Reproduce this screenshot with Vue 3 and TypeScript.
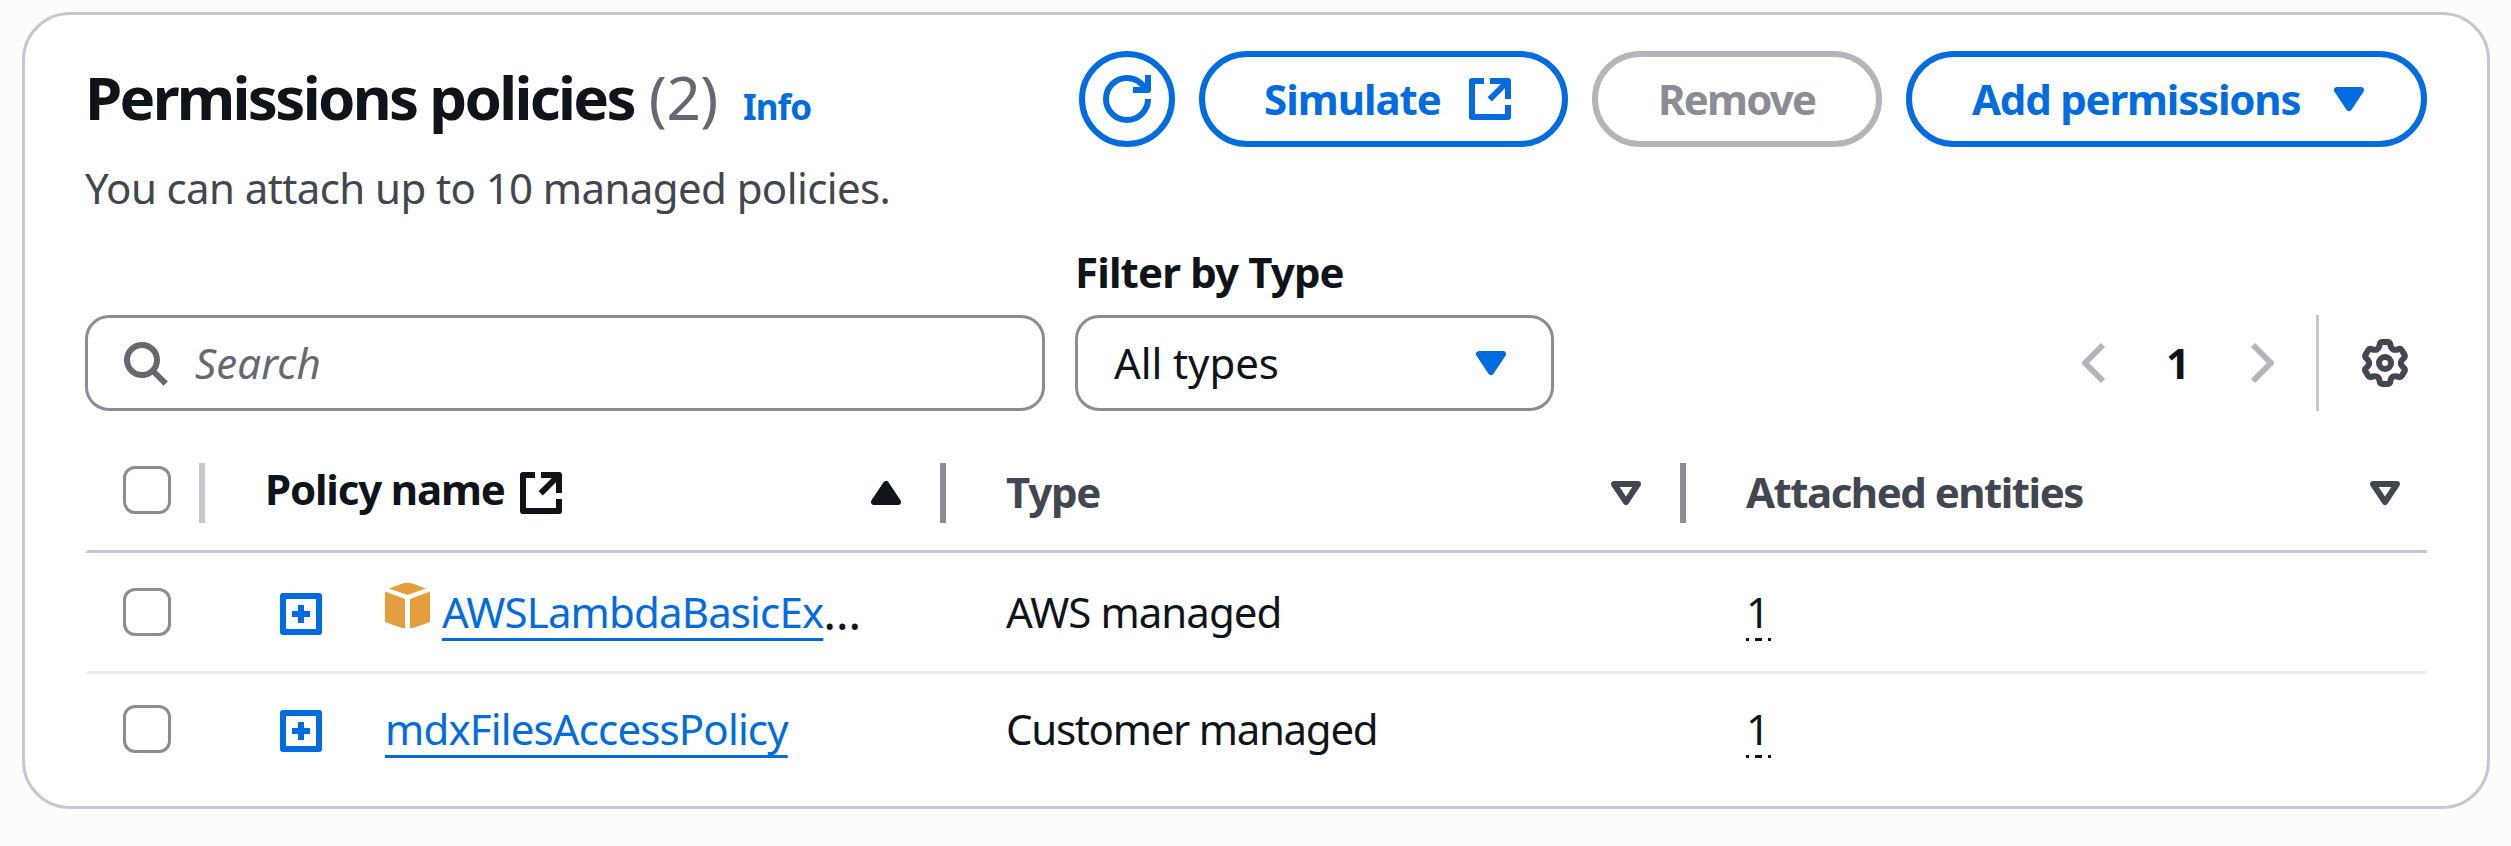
<script setup lang="ts">
interface Policy {
  name: string
  truncated: boolean
  awsManaged: boolean
  type: string
  entities: number
}

const policies: Policy[] = [
  { name: 'AWSLambdaBasicEx', truncated: true, awsManaged: true, type: 'AWS managed', entities: 1 },
  { name: 'mdxFilesAccessPolicy', truncated: false, awsManaged: false, type: 'Customer managed', entities: 1 },
]

// Six-tooth gear outline, centred on (8, 8) of a 16-unit box.
function gearOutline(): string {
  const at = (deg: number, u: number, v: number): string => {
    const a = (deg * Math.PI) / 180
    const x = 8 + u * Math.cos(a) + v * Math.sin(a)
    const y = 8 + u * Math.sin(a) - v * Math.cos(a)
    return `${x.toFixed(2)} ${y.toFixed(2)}`
  }
  let d = `M${at(0, -1.8, 6)}`
  for (let deg = 0; deg < 360; deg += 60) {
    d += `Q${at(deg, -1.7, 7)} ${at(deg, -0.8, 7)}L${at(deg, 0.8, 7)}Q${at(deg, 1.7, 7)} ${at(deg, 1.8, 6)}`
    d += `C${at(deg, 2.05, 4.6)} ${at(deg + 60, -2.05, 4.6)} ${at(deg + 60, -1.8, 6)}`
  }
  return d + 'Z'
}
const gear = gearOutline()
</script>

<template>
  <main class="page">
    <section class="card">
      <header class="header">
        <div class="heading">
          <h2 class="title-row">
            <span class="title">Permissions policies</span>
            <span class="counter">(2)</span>
            <a class="info">Info</a>
          </h2>
          <p class="description">You can attach up to 10 managed policies.</p>
        </div>
        <div class="actions">
          <button class="btn btn-round" aria-label="Refresh">
            <svg class="icon" viewBox="0 0 16 16">
              <path class="line" d="M10 5h5V0" />
              <path class="line" d="M15 8a7 7 0 1 1-7-7 6.87 6.87 0 0 1 6.3 4" />
            </svg>
          </button>
          <button class="btn btn-simulate">
            <span class="simulate-text">Simulate</span>
            <svg class="icon" viewBox="0 0 16 16">
              <path class="line" d="M14 10v4H2V2h4M8 2h6v6M14 2 7.9 8.1" />
            </svg>
          </button>
          <button class="btn btn-remove" disabled><span class="remove-text">Remove</span></button>
          <button class="btn btn-add">
            <span class="add-text">Add permissions</span>
            <svg class="icon" viewBox="0 0 16 16"><path class="solid" d="M4 5h8l-4 6z" /></svg>
          </button>
        </div>
      </header>

      <div class="toolbar">
        <div class="field search">
          <svg class="icon" viewBox="0 0 16 16">
            <circle class="line" cx="7" cy="7" r="5" />
            <path class="line" d="m14.9 14.9-4.4-4.4" />
          </svg>
          <span class="placeholder">Search</span>
        </div>
        <div class="filter">
          <label class="filter-label">Filter by Type</label>
          <div class="field select">
            <span class="select-value">All types</span>
            <svg class="icon caret" viewBox="0 0 16 16"><path class="solid" d="M4 5h8l-4 6z" /></svg>
          </div>
        </div>
        <nav class="pagination">
          <svg class="icon arrow" viewBox="0 0 16 16"><path class="line" d="M11 2 5 8l6 6" /></svg>
          <span class="page-number">1</span>
          <svg class="icon arrow" viewBox="0 0 16 16"><path class="line" d="m5 2 6 6-6 6" /></svg>
          <span class="separator"></span>
          <svg class="icon gear" viewBox="0 0 16 16">
            <path class="line" :d="gear" />
            <circle class="line" cx="8" cy="8" r="2" />
          </svg>
        </nav>
      </div>

      <div class="table">
        <div class="row head">
          <div class="cell check"><span class="checkbox"></span><span class="divider light"></span></div>
          <div class="cell name-head">
            <span class="name-label">Policy name</span>
            <svg class="icon" viewBox="0 0 16 16">
              <path class="line" d="M14 10v4H2V2h4M8 2h6v6M14 2 7.9 8.1" />
            </svg>
            <svg class="icon sort" viewBox="0 0 16 16"><path class="solid" d="M4 11h8L8 5z" /></svg>
            <span class="divider"></span>
          </div>
          <div class="cell other-head">
            <span class="type-label">Type</span>
            <svg class="icon sort" viewBox="0 0 16 16"><path class="line" d="M4 5h8l-4 6z" /></svg>
            <span class="divider"></span>
          </div>
          <div class="cell other-head">
            <span class="entities-label">Attached entities</span>
            <svg class="icon sort last" viewBox="0 0 16 16"><path class="line" d="M4 5h8l-4 6z" /></svg>
          </div>
        </div>
        <div v-for="policy in policies" :key="policy.name" class="row body">
          <div class="cell check"><span class="checkbox"></span></div>
          <div class="cell name-cell">
            <svg class="icon expand" viewBox="0 0 16 16">
              <path class="line" d="M2 2h12v12H2zM8 5v6M5 8h6" />
            </svg>
            <svg v-if="policy.awsManaged" class="cube" viewBox="0 0 45 45">
              <path d="M4 5.5 19 0h7l15 5.5-18.500 6.500zM0 8.500l20 7.500v29h-3L0 39zM45 8.500 25 16v29h3l17-6z" />
            </svg>
            <a class="link">{{ policy.name }}</a><span v-if="policy.truncated" class="ellipsis">…</span>
          </div>
          <div class="cell text-cell">
            <span :class="policy.awsManaged ? 'aws-type' : 'customer-type'">{{ policy.type }}</span>
          </div>
          <div class="cell text-cell"><span class="entities">{{ policy.entities }}</span></div>
        </div>
      </div>
    </section>
  </main>
</template>

<style>
body {
  margin: 0;
  background: #fcfcfd;
}
</style>

<style scoped>
.page {
  box-sizing: border-box;
  height: 846px;
  padding: 12px 21px 0 22px;
  font-family: "Noto Sans", "Open Sans", sans-serif;
  font-size: 42px;
  line-height: 60px;
  color: #0f141a;
  white-space: nowrap;
}
.card {
  box-sizing: border-box;
  height: 797px;
  padding: 36px 60px 0;
  border: 3px solid #c6c6cd;
  border-radius: 48px;
  background: #fff;
}
.icon {
  display: block;
  flex: none;
  width: 48px;
  height: 48px;
  overflow: visible;
  color: inherit;
}
.line,
.solid {
  fill: none;
  stroke: currentColor;
  stroke-width: 2;
  stroke-linejoin: round;
}
.solid {
  fill: currentColor;
}
.header {
  display: flex;
  justify-content: space-between;
  height: 190px;
}
.heading {
  padding-top: 10px;
}
.title-row {
  display: flex;
  align-items: baseline;
  height: 72px;
  margin: 0;
  font-size: 60px;
  line-height: 72px;
}
.title {
  letter-spacing: -2.7px;
}
.counter {
  margin-left: 15px;
  font-weight: 400;
  letter-spacing: -0.4px;
  color: #656871;
}
.info {
  margin-left: 25px;
  font-size: 35px;
  line-height: 40px;
  letter-spacing: -0.9px;
  color: #006ce0;
}
.description {
  margin: 25px 0 0;
  letter-spacing: -0.6px;
  color: #424650;
}
.actions {
  display: flex;
  gap: 24px;
}
.btn {
  box-sizing: border-box;
  display: flex;
  align-items: center;
  justify-content: space-between;
  height: 96px;
  padding: 0 48px 0 60px;
  border: 6px solid #006ce0;
  border-radius: 48px;
  background: #fff;
  font: inherit;
  font-weight: 700;
  color: #006ce0;
}
.btn-round {
  justify-content: center;
  width: 96px;
  padding: 0;
}
.btn-simulate {
  width: 369px;
  padding-left: 59px;
}
.btn-remove {
  width: 290px;
  border-color: #b4b4bb;
  color: #8c8c94;
}
.btn-add {
  width: 521px;
}
.simulate-text {
  letter-spacing: -1px;
}
.remove-text {
  letter-spacing: -1.8px;
}
.add-text {
  letter-spacing: -1.2px;
}
.toolbar {
  display: flex;
  align-items: flex-end;
  height: 170px;
}
.field {
  box-sizing: border-box;
  display: flex;
  align-items: center;
  height: 96px;
  border: 3px solid #8c8c94;
  border-radius: 24px;
}
.search {
  width: 960px;
  padding-left: 33px;
  color: #656871;
}
.placeholder {
  margin-left: 26px;
  font-style: italic;
  letter-spacing: 0.1px;
}
.filter {
  margin-left: 30px;
}
.filter-label {
  display: block;
  margin-bottom: 13px;
  font-weight: 700;
  letter-spacing: -0.85px;
}
.select {
  justify-content: space-between;
  width: 479px;
  padding: 0 36px;
}
.select-value {
  letter-spacing: -0.1px;
}
.caret {
  color: #006ce0;
}
.pagination {
  display: flex;
  align-items: center;
  height: 96px;
  margin-left: auto;
  padding-right: 18px;
}
.arrow {
  color: #b4b4bb;
}
.page-number {
  width: 24px;
  margin: 0 48px;
  font-weight: 700;
}
.separator {
  width: 3px;
  height: 96px;
  margin: 0 42px 0 30px;
  background: #c6c6cd;
}
.gear {
  color: #424650;
}
.table {
  margin-top: 25px;
}
.row {
  box-sizing: border-box;
  display: grid;
  grid-template-columns: 117px 741px 740px 741px;
  border-bottom: 3px solid #ebebf0;
  border-left: 3px solid transparent;
}
.head {
  height: 117px;
  border-bottom-color: #c6c6cd;
  font-weight: 700;
}
.body {
  height: 121px;
}
.body:last-child {
  height: 110px;
  border-bottom: 0;
}
.cell {
  display: flex;
  align-items: center;
  min-width: 0;
}
.check {
  justify-content: space-between;
  padding-left: 35px;
}
.checkbox {
  box-sizing: border-box;
  width: 48px;
  height: 48px;
  border: 3px solid #8c8c94;
  border-radius: 12px;
}
.head .checkbox {
  margin-bottom: 6px;
}
.divider {
  width: 6px;
  height: 60px;
  background: #8c8c94;
}
.light {
  background: #c6c6cd;
}
.name-head {
  padding-left: 60px;
}
.name-label {
  margin: 0 12px 8px 0;
  letter-spacing: -1.16px;
}
.other-head {
  padding-left: 60px;
  color: #424650;
}
.type-label,
.entities-label {
  margin-bottom: 2px;
  letter-spacing: -1.2px;
}
.entities-label {
  letter-spacing: -1.5px;
}
.sort {
  margin: 0 30px 0 auto;
}
.last {
  margin-right: 18px;
}
.name-cell {
  padding-left: 72px;
}
.expand {
  margin: 4px 60px 0 0;
  color: #006ce0;
}
.cube {
  width: 45px;
  height: 45px;
  margin: 0 12px 13px 0;
  fill: #e59e3d;
}
.link {
  letter-spacing: -0.85px;
  color: #006ce0;
  text-decoration: underline;
  text-decoration-thickness: 3px;
  text-decoration-skip-ink: none;
  text-underline-offset: 10px;
}
.ellipsis {
  font-size: 48px;
}
.text-cell {
  padding-left: 60px;
}
.aws-type {
  letter-spacing: -0.95px;
}
.customer-type {
  letter-spacing: -1.3px;
}
.entities {
  width: 25px;
  background: repeating-linear-gradient(90deg, #0f141a 0 3px, transparent 3px 9px, #0f141a 9px 16px, transparent 16px 22px) 0 56px / 25px 3px no-repeat;
}
</style>
